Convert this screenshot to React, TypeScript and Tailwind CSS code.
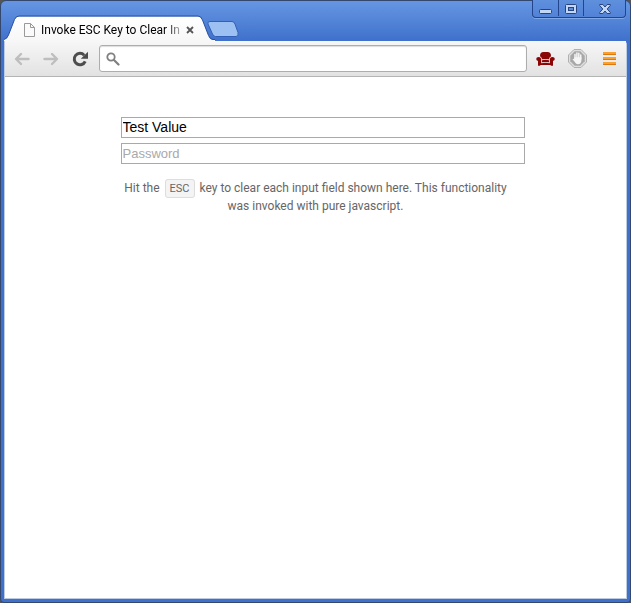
import React, { useState } from "react";

function WindowControls() {
  const button = "flex h-4 items-center justify-center";
  return (
    <div className="mr-px flex h-[18px] rounded-b border border-t-0 border-[#24458c] bg-linear-to-b from-[#5f90de] to-[#5282d6] shadow-[0_1px_0_#7fa6e6]">
      <button aria-label="Minimize" className={`${button} w-[26px] border-r border-[#24458c]`}>
        <svg width="13" height="15" viewBox="0 0 13 15">
          <rect x="0.5" y="8.5" width="12" height="4" rx="1" fill="#c3d7f5" stroke="#27447f" />
        </svg>
      </button>
      <button aria-label="Maximize" className={`${button} w-[25px] border-r border-[#24458c]`}>
        <svg width="12" height="15" viewBox="0 0 12 15">
          <rect x="0.5" y="3.5" width="11" height="9" rx="1" fill="#c3d7f5" stroke="#27447f" />
          <rect x="3.5" y="6.5" width="5" height="3" fill="#5f8cd8" stroke="#27447f" />
        </svg>
      </button>
      <button aria-label="Close" className={`${button} w-[41px]`}>
        <svg width="12" height="15" viewBox="0 0 12 15">
          <path
            d="M0.7 3.5h3.2l2.1 2.5 2.1-2.5h3.2v1L8.2 8l3.1 3.5v1H8.1L6 10l-2.1 2.5H0.7v-1L3.8 8 0.7 4.5z"
            fill="#c3d7f5"
            stroke="#27447f"
          />
        </svg>
      </button>
    </div>
  );
}

function Tab() {
  return (
    <div className="relative h-[26px] w-[211px] shrink-0">
      <svg className="absolute inset-0" width="211" height="26" viewBox="0 0 211 26">
        <defs>
          <linearGradient id="tabFill" x1="0" y1="0" x2="0" y2="1">
            <stop offset="0" stopColor="#ffffff" />
            <stop offset="1" stopColor="#f7f7f7" />
          </linearGradient>
        </defs>
        <path
          d="M0 26V24.5Q3 24 4.5 20L10.5 4.5Q12 1.5 15 1.5H194Q197 1.5 198.5 5L204.5 20.5Q206 24.5 209 25H211V26z"
          fill="url(#tabFill)"
        />
        <path
          d="M0 24.5Q3 24 4.5 20L10.5 4.5Q12 1 15 1H194Q197 1 198.5 5L204.5 20.5Q206 24.5 209 24.5H211"
          fill="none"
          stroke="#27509f"
        />
      </svg>
      <div className="relative flex h-full items-center pt-1 pl-5">
        <svg width="11" height="14" viewBox="0 0 11 14" className="shrink-0">
          <path d="M0.5 0.5H6.5L10.5 4.5V13.5H0.5zM6.5 0.5V4.5H10.5" fill="#fafafa" stroke="#999" />
        </svg>
        <span className="ml-[6px] w-[142px] bg-linear-to-r from-black from-85% to-[#d4d4d4] bg-clip-text font-[Roboto,sans-serif] text-[12px] leading-4 whitespace-nowrap text-transparent">
          Invoke ESC Key to Clear In
        </span>
        <button aria-label="Close tab" className="ml-[3px]">
          <svg width="8" height="8" viewBox="0 0 8 8">
            <path d="M1 1l6 6M7 1L1 7" stroke="#555" strokeWidth="1.8" />
          </svg>
        </button>
      </div>
    </div>
  );
}

function TitleBar() {
  return (
    <header className="flex h-[41px] items-start justify-between">
      <div className="flex pt-[15px]">
        <Tab />
        <button aria-label="New tab" className="-ml-2 h-[26px]">
          <svg width="32" height="26" viewBox="0 0 32 26">
            <path
              d="M3 6.5H25Q27 6.5 28 9L31 17.5Q32 21.5 29 21.5H8.5Q6.5 21.5 5.5 19L1 9Q0 6.5 3 6.5z"
              fill="#9cc0f1"
              stroke="#3260b4"
            />
          </svg>
        </button>
      </div>
      <WindowControls />
    </header>
  );
}

function Arrow({ direction }: { direction: "Back" | "Forward" }) {
  return (
    <button aria-label={direction}>
      <svg width="16" height="14" viewBox="0 0 16 14" className={direction === "Forward" ? "-scale-x-100" : ""}>
        <path
          d="M7 2L2 7l5 5M2.5 7H14.5"
          fill="none"
          stroke="#bebebe"
          strokeWidth="2.4"
          strokeLinecap="round"
          strokeLinejoin="round"
        />
      </svg>
    </button>
  );
}

function Toolbar() {
  return (
    <nav className="flex h-9 items-center border-b border-[#b4b4b4] bg-linear-to-b from-[#f7f7f7] to-[#e2e2e2] px-[9px]">
      <Arrow direction="Back" />
      <div className="ml-[13px] flex">
        <Arrow direction="Forward" />
      </div>
      <button aria-label="Reload" className="ml-[13px]">
        <svg width="17" height="16" viewBox="0 0 17 16">
          <path d="M12.2 4.2A5.7 5.7 0 1 0 13.2 10.3" fill="none" stroke="#4d4d4d" strokeWidth="3" />
          <path d="M16 .7V7.7H8.800z" fill="#4d4d4d" />
        </svg>
      </button>
      <label className="ml-[10px] flex h-[27px] min-w-0 flex-1 items-center rounded-[3px] border border-[#adadad] bg-white pl-[6px] shadow-[inset_0_1px_1px_#dddddd]">
        <svg width="14" height="14" viewBox="0 0 14 14" className="shrink-0">
          <circle cx="5" cy="5" r="3.7" fill="none" stroke="#808080" strokeWidth="1.8" />
          <path d="M8 8l4.5 4.5" stroke="#808080" strokeWidth="2.2" strokeLinecap="round" />
        </svg>
        <input
          aria-label="Address and search bar"
          className="min-w-0 flex-1 bg-transparent px-2 font-[Roboto,sans-serif] text-[12px] outline-none"
        />
      </label>
      <button aria-label="Armchair extension" className="ml-[9px]">
        <svg width="19" height="16" viewBox="0 0 19 16">
          <path d="M4 5.2Q4 1 7.500 1H11.500Q15 1 15 5.2Q13.200 6 13 8.300Q9.500 7.500 6 8.300Q5.800 6 4 5.200z" fill="#8b0505" />
          <path d="M6 9.300Q9.500 8.300 13 9.300V11.300Q9.500 10.600 6 11.300z" fill="#8b0505" />
          <path
            d="M2.700 6Q5.200 6 5.200 9V12.300Q9.500 11.300 13.800 12.300V9Q13.800 6 16.300 6Q18.800 6.200 18.800 8Q18.700 9.700 17 10V14.800H14.700V14H4.300V14.800H2V10Q.3 9.700.2 8Q.2 6.200 2.700 6z"
            fill="#8b0505"
          />
        </svg>
      </button>
      <button aria-label="Blocker extension" className="ml-[13px]">
        <svg width="19" height="19" viewBox="0 0 19 19">
          <path d="M6 .5H13L18.5 6V13L13 18.5H6L.5 13V6z" fill="#dedede" stroke="#b0b0b0" />
          <path d="M6.700 2.300H12.300L16.700 6.700V12.300L12.300 16.700H6.700L2.300 12.300V6.700z" fill="#a8a8a8" />
          <path
            d="M7 10V5.500M8.900 9V4M10.800 9V4.300M12.700 10V6"
            stroke="#f5f5f5"
            strokeWidth="1.500"
            strokeLinecap="round"
          />
          <path d="M6.300 8.200H13.400V11.500Q13.200 15.200 10 15.200Q8 15.200 6.800 13L4.500 10.300Q5.300 9.200 6.300 10.200z" fill="#f5f5f5" />
        </svg>
      </button>
      <button aria-label="Menu" className="ml-4 pr-px">
        <svg width="13" height="14" viewBox="0 0 13 14">
          <path d="M0 1.5H13M0 6.5H13M0 11.5H13" stroke="#f8a030" strokeWidth="3" />
          <path d="M0 2.5H13M0 7.5H13M0 12.5H13" stroke="#df780d" />
        </svg>
      </button>
    </nav>
  );
}

export default function App() {
  const [name, setName] = useState("Test Value");
  const [password, setPassword] = useState("");

  const clearOnEscape = (clear: (value: string) => void) => (event: React.KeyboardEvent) => {
    if (event.key === "Escape") clear("");
  };

  const field =
    "block h-[21px] w-full border border-[#a9a9a9] bg-white px-px font-['Liberation_Sans',Arial,sans-serif] text-[14px] text-black outline-none placeholder:text-[13px] placeholder:text-[#a9a9a9]";

  return (
    <div className="min-h-screen bg-[#555555]">
      <div className="flex min-h-screen flex-col rounded-t-md rounded-b border border-[#34486e] bg-[#3e70cc] bg-linear-to-b from-[#6696e2] to-[#3e70cc] to-[41px] px-[3px] pb-[3px]">
        <div className="-mt-px">
          <TitleBar />
        </div>
        <div className="flex flex-1 flex-col rounded-tr-sm border border-t-0 border-[#bccbe0] bg-white">
          <Toolbar />
          <main className="mx-auto w-full max-w-[450px] pt-10 pr-4 pl-[30px]">
            <form className="flex flex-col gap-[5px]">
              <input
                aria-label="Name"
                className={field}
                value={name}
                onChange={(event) => setName(event.target.value)}
                onKeyDown={clearOnEscape(setName)}
              />
              <input
                aria-label="Password"
                type="password"
                placeholder="Password"
                className={field}
                value={password}
                onChange={(event) => setPassword(event.target.value)}
                onKeyDown={clearOnEscape(setPassword)}
              />
            </form>
            <p className="mt-[15px] w-[390px] max-w-full text-center font-[Roboto,sans-serif] text-[12px] leading-[18px] text-[#666666]">
              Hit the{" "}
              <kbd className="mx-[2px] rounded-[3px] border border-[#dddddd] bg-[#f4f4f4] px-1 py-[2px] font-[Roboto,sans-serif] text-[11px] leading-none">
                ESC
              </kbd>{" "}
              key to clear each input field shown here. This functionality was invoked with pure javascript.
            </p>
          </main>
        </div>
      </div>
    </div>
  );
}
